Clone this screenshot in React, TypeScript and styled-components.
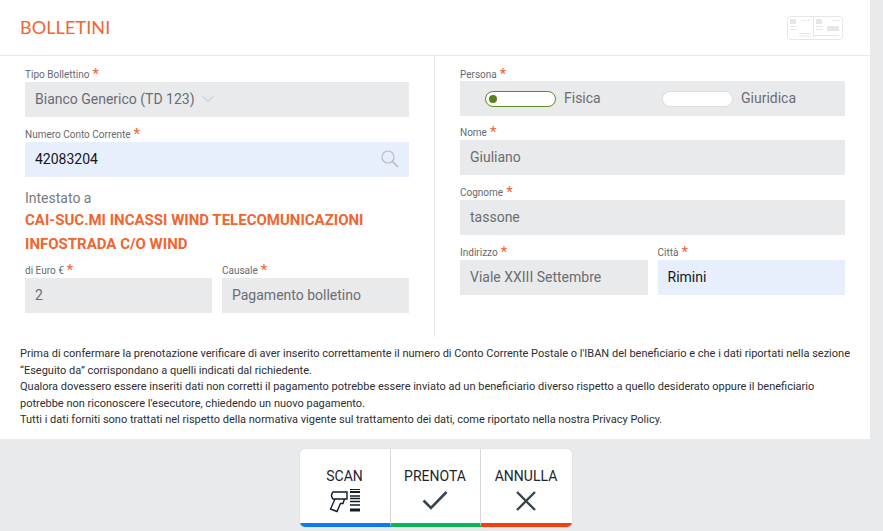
import React from "react";
import styled, { createGlobalStyle } from "styled-components";

const GlobalStyle = createGlobalStyle`
  html, body {
    margin: 0;
    padding: 0;
    height: 531px;
    overflow: hidden;
    background: #e9eaec;
    font-family: Roboto, "Liberation Sans", sans-serif;
  }
`;

const Page = styled.div`
  width: 883px;
  height: 531px;
  display: flex;
  flex-direction: column;
`;

const Panel = styled.div`
  width: 870px;
  height: 439px;
  background: #fff;
  display: flex;
  flex-direction: column;
`;

const Header = styled.div`
  height: 55px;
  flex: none;
  box-sizing: content-box;
  border-bottom: 1px solid #e8e8e8;
  display: flex;
  align-items: center;
  justify-content: space-between;
  padding: 0 27px 0 20px;
`;

const Title = styled.h1`
  margin: 0 0 1px;
  font-family: Lato, sans-serif;
  font-size: 18px;
  font-weight: 400;
  letter-spacing: 0.1px;
  color: #f26430;
`;

const Columns = styled.div`
  display: grid;
  grid-template-columns: 435px 435px;
  height: 281px;
  flex: none;
`;

const Column = styled.div<{ $right?: boolean }>`
  padding: 9px 25px 0;
  border-right: ${({ $right }) => ($right ? "none" : "1px solid #e8e8e8")};
  display: flex;
  flex-direction: column;
`;

const Field = styled.div<{ $gap?: number }>`
  display: flex;
  flex-direction: column;
  min-width: 0;
  margin-bottom: ${({ $gap }) => $gap ?? 8}px;
`;

const Label = styled.label`
  display: flex;
  align-items: flex-start;
  height: 17px;
  font-size: 10px;
  line-height: 20px;
  color: #666a70;
`;

const Star = styled.span`
  color: #f26430;
  font-size: 15px;
  line-height: 19px;
  margin-left: 3px;
`;

const Input = styled.div<{ $active?: boolean }>`
  height: 35px;
  box-sizing: border-box;
  display: flex;
  align-items: center;
  justify-content: space-between;
  padding: 0 10px 1px;
  font-size: 14px;
  background: ${({ $active }) => ($active ? "#e7effc" : "#e9eaec")};
  color: ${({ $active }) => ($active ? "#16161e" : "#6a6d73")};
`;

const SelectValue = styled.span`
  display: flex;
  align-items: center;
  gap: 7px;
`;

const Row = styled.div`
  display: grid;
  grid-template-columns: 1fr 1fr;
  gap: 10px;
`;

const HolderTitle = styled.div`
  font-size: 14px;
  line-height: 17px;
  color: #787b80;
  margin: 5px 0 1px;
`;

const HolderName = styled.div`
  font-size: 15px;
  font-weight: 700;
  line-height: 24px;
  color: #f26430;
  margin-bottom: 5px;
`;

const RadioBox = styled.div`
  height: 35px;
  box-sizing: border-box;
  margin-top: -1px;
  display: grid;
  grid-template-columns: 177px 1fr;
  align-items: center;
  padding: 0 0 1px 25px;
  font-size: 14px;
  color: #6a6d73;
  background: #e9eaec;
`;

const RadioOption = styled.div`
  display: flex;
  align-items: center;
  gap: 8px;
`;

const Pill = styled.span<{ $on?: boolean }>`
  width: 71px;
  height: 16px;
  margin-top: 1px;
  box-sizing: border-box;
  border-radius: 8px;
  background: #fff;
  border: 1px solid ${({ $on }) => ($on ? "#5b8c22" : "#dcdcdc")};
  display: flex;
  align-items: center;
  padding-left: 3px;
`;

const Dot = styled.span`
  width: 8px;
  height: 8px;
  border-radius: 50%;
  background: #55841c;
`;

const Notes = styled.div`
  padding: 9px 20px 0;
  font-size: 11px;
  line-height: 16.5px;
  color: #2b2e33;
`;

const Toolbar = styled.div`
  flex: 1;
  display: flex;
  justify-content: center;
  align-items: flex-start;
  width: 871px;
  padding-top: 10px;
`;

const Buttons = styled.div`
  display: flex;
  background: #fff;
  border-radius: 5px;
  overflow: hidden;
  box-shadow: 0 0 1px rgba(0, 0, 0, 0.25);
`;

const ActionButton = styled.button<{ $color: string; $width: number; $last?: boolean }>`
  width: ${({ $width }) => $width}px;
  height: 78px;
  padding: 19px 0 0;
  box-sizing: border-box;
  border: none;
  border-right: ${({ $last }) => ($last ? "none" : "1px solid #d8d8d8")};
  border-bottom: 4px solid ${({ $color }) => $color};
  background: #fff;
  display: flex;
  flex-direction: column;
  align-items: center;
  font-family: inherit;
  font-size: 14px;
  line-height: 16px;
  color: #1a2530;
`;

const IconSlot = styled.span`
  height: 28px;
  margin-top: 3px;
  display: flex;
  align-items: center;
  justify-content: center;
`;

const TicketIcon = () => (
  <svg width="56" height="24" viewBox="0 0 56 24" fill="none" stroke="#e6e6e6">
    <rect x="0.5" y="0.5" width="55" height="23" rx="3" strokeWidth="1" />
    <line x1="26.5" y1="1" x2="26.5" y2="21" />
    <rect x="3" y="3" width="6" height="5" fill="#e6e6e6" stroke="none" />
    <rect x="29" y="3" width="6" height="5" fill="#e6e6e6" stroke="none" />
    <line x1="15" y1="4.5" x2="24" y2="4.5" strokeDasharray="2 1" />
    <line x1="46" y1="4.5" x2="53" y2="4.5" strokeDasharray="2 1" />
    <line x1="3" y1="10.5" x2="10" y2="10.5" />
    <line x1="3" y1="13.5" x2="10" y2="13.5" />
    <line x1="29" y1="10.5" x2="36" y2="10.5" />
    <line x1="29" y1="13.5" x2="36" y2="13.5" />
    <rect x="40" y="10" width="12" height="5" fill="#e6e6e6" stroke="none" />
    <line x1="12" y1="17.5" x2="24" y2="17.5" />
    <line x1="12" y1="20" x2="24" y2="20" />
    <line x1="27" y1="19.5" x2="52" y2="19.5" />
  </svg>
);

const ChevronIcon = () => (
  <svg width="12" height="8" viewBox="0 0 12 8" fill="none" stroke="#b9bbbe">
    <path d="M1 1.5 L6 6.5 L11 1.5" />
  </svg>
);

const SearchIcon = () => (
  <svg width="18" height="18" viewBox="0 0 18 18" fill="none" stroke="#b9bcbf" strokeWidth="1.2">
    <circle cx="7" cy="7" r="6" />
    <path d="M11.5 11.5 L17 17" strokeWidth="1.6" />
  </svg>
);

const ScanIcon = () => (
  <svg width="32" height="25" viewBox="0 0 32 25" fill="none" stroke="#131c25" strokeWidth="1.4">
    <path d="M4 3 H18 V10 H4 Q1 6.5 4 3 Z" />
    <path d="M6 10 L1.5 20 L8 22.5 L11.5 14.5 H14 L15.5 10" />
    <path d="M21 0 H31 M21 3 H31" strokeWidth="2" />
    <path d="M21 7 H31 M21 9.5 H31 M21 12.5 H31 M21 16 H31" strokeWidth="1.5" />
    <path d="M21 21 H31" strokeWidth="3" />
  </svg>
);

const CheckIcon = () => (
  <svg width="26" height="20" viewBox="0 0 26 20" fill="none" stroke="#36444f" strokeWidth="2.6">
    <path d="M1.5 9.5 L9 17 L24.5 1" />
  </svg>
);

const CloseIcon = () => (
  <svg width="22" height="22" viewBox="0 0 22 22" fill="none" stroke="#36444f" strokeWidth="2.4">
    <path d="M2 2 L20 20 M20 2 L2 20" />
  </svg>
);

const Req = ({ children }: { children: React.ReactNode }) => (
  <Label>
    {children}
    <Star>*</Star>
  </Label>
);

export default function App() {
  return (
    <Page>
      <GlobalStyle />
      <Panel>
        <Header>
          <Title>BOLLETINI</Title>
          <TicketIcon />
        </Header>
        <Columns>
          <Column>
            <Field>
              <Req>Tipo Bollettino</Req>
              <Input>
                <SelectValue>
                  Bianco Generico (TD 123) <ChevronIcon />
                </SelectValue>
              </Input>
            </Field>
            <Field>
              <Req>Numero Conto Corrente</Req>
              <Input $active>
                42083204
                <SearchIcon />
              </Input>
            </Field>
            <HolderTitle>Intestato a</HolderTitle>
            <HolderName>
              CAI-SUC.MI INCASSI WIND TELECOMUNICAZIONI
              <br />
              INFOSTRADA C/O WIND
            </HolderName>
            <Row>
              <Field>
                <Req>di Euro €</Req>
                <Input>2</Input>
              </Field>
              <Field>
                <Req>Causale</Req>
                <Input>Pagamento bolletino</Input>
              </Field>
            </Row>
          </Column>
          <Column $right>
            <Field $gap={7}>
              <Req>Persona</Req>
              <RadioBox>
                <RadioOption>
                  <Pill $on>
                    <Dot />
                  </Pill>
                  Fisica
                </RadioOption>
                <RadioOption>
                  <Pill />
                  Giuridica
                </RadioOption>
              </RadioBox>
            </Field>
            <Field>
              <Req>Nome</Req>
              <Input>Giuliano</Input>
            </Field>
            <Field>
              <Req>Cognome</Req>
              <Input>tassone</Input>
            </Field>
            <Row>
              <Field>
                <Req>Indirizzo</Req>
                <Input>Viale XXIII Settembre</Input>
              </Field>
              <Field>
                <Req>Città</Req>
                <Input $active>Rimini</Input>
              </Field>
            </Row>
          </Column>
        </Columns>
        <Notes>
          Prima di confermare la prenotazione verificare di aver inserito correttamente il numero di Conto Corrente Postale o l'IBAN del beneficiario e che i dati riportati nella sezione
          <br />
          “Eseguito da” corrispondano a quelli indicati dal richiedente.
          <br />
          Qualora dovessero essere inseriti dati non corretti il pagamento potrebbe essere inviato ad un beneficiario diverso rispetto a quello desiderato oppure il beneficiario
          <br />
          potrebbe non riconoscere l'esecutore, chiedendo un nuovo pagamento.
          <br />
          Tutti i dati forniti sono trattati nel rispetto della normativa vigente sul trattamento dei dati, come riportato nella nostra Privacy Policy.
        </Notes>
      </Panel>
      <Toolbar>
        <Buttons>
          <ActionButton $color="#0a7cf0" $width={91}>
            SCAN
            <IconSlot>
              <ScanIcon />
            </IconSlot>
          </ActionButton>
          <ActionButton $color="#0bb455" $width={90}>
            PRENOTA
            <IconSlot>
              <CheckIcon />
            </IconSlot>
          </ActionButton>
          <ActionButton $color="#f4400f" $width={91} $last>
            ANNULLA
            <IconSlot>
              <CloseIcon />
            </IconSlot>
          </ActionButton>
        </Buttons>
      </Toolbar>
    </Page>
  );
}
